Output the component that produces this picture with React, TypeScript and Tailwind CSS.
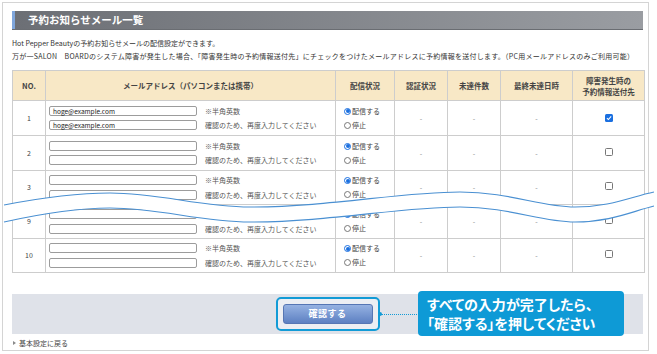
import React from 'react';

type Row = { no: number; email: string; checked: boolean; h: string };

const rows: Row[] = [
  { no: 1, email: 'hoge@example.com', checked: true, h: 'h-[35px]' },
  { no: 2, email: '', checked: false, h: 'h-[35px]' },
  { no: 3, email: '', checked: false, h: 'h-[34px]' },
  { no: 9, email: '', checked: false, h: 'h-[34px]' },
  { no: 10, email: '', checked: false, h: 'h-[34px]' },
];

const cell = 'border border-[#cdcdcd]';

const FieldBox: React.FC<{ value: string }> = ({ value }) => (
  <div className="w-[148px] h-[10px] border border-[#9c9c9c] rounded-[2px] bg-white pl-[3px] text-[6.5px] leading-[8px] text-[#222]">
    {value}
  </div>
);

const Radio: React.FC<{ on?: boolean; label: string }> = ({ on, label }) => (
  <div className="flex items-center gap-[1px] h-[14px]">
    <span
      className={
        on
          ? 'w-[7px] h-[7px] rounded-full border border-[#1a6fe0] bg-white flex items-center justify-center'
          : 'w-[7px] h-[7px] rounded-full border border-[#777] bg-white'
      }
    >
      {on && <span className="w-[4px] h-[4px] rounded-full bg-[#1a6fe0]" />}
    </span>
    <span>{label}</span>
  </div>
);

const Check: React.FC<{ on: boolean }> = ({ on }) =>
  on ? (
    <span className="inline-flex w-[8px] h-[8px] rounded-[1.5px] bg-[#1a6fe0] items-center justify-center">
      <svg width="6" height="6" viewBox="0 0 10 10">
        <path d="M1.5 5.2 L4 7.6 L8.6 2.4" fill="none" stroke="#fff" strokeWidth="1.8" />
      </svg>
    </span>
  ) : (
    <span className="inline-block w-[8px] h-[8px] rounded-[1.5px] border border-[#777] bg-white" />
  );

export default function App() {
  return (
    <div className="relative w-[657px] h-[354px] bg-white font-['Noto_Sans_CJK_JP',sans-serif] text-[#333]">
      <div className="ml-[2px] mt-[2px] w-[647px] h-[349px] border border-[#d4d4d4] pl-[9px] pt-[8px]">
        <div className="w-[631px] h-[19px] flex border-b border-[#6a6d72] bg-gradient-to-r from-[#6c6f75] to-[#9a9da2]">
          <div className="w-[3px] bg-[#7fa6dc]" />
          <div className="pl-[13px] text-[10.5px] leading-[18px] font-bold text-white">予約お知らせメール一覧</div>
        </div>

        <div className="mt-[7px] text-[7px] leading-[13px] text-[#333]">
          <p>Hot Pepper Beautyの予約お知らせメールの配信設定ができます。</p>
          <p className="tracking-[0.25px]">
            万が一SALON　BOARDのシステム障害が発生した場合、「障害発生時の予約情報送付先」にチェックをつけたメールアドレスに予約情報を送付します。（PC用メールアドレスのみご利用可能）
          </p>
        </div>

        <table className="mt-[7px] w-[632px] table-fixed border-collapse text-[7px] text-[#444]">
          <colgroup>
            <col className="w-[33px]" />
            <col className="w-[290px]" />
            <col className="w-[59px]" />
            <col className="w-[53px]" />
            <col className="w-[53px]" />
            <col className="w-[72px]" />
            <col className="w-[72px]" />
          </colgroup>
          <thead>
            <tr className="h-[30px] bg-[#f8e8c6] text-[7.5px] font-bold leading-[11px]">
              <th className={cell}>NO.</th>
              <th className={cell}>メールアドレス（パソコンまたは携帯）</th>
              <th className={cell}>配信状況</th>
              <th className={cell}>認証状況</th>
              <th className={cell}>未達件数</th>
              <th className={cell}>最終未達日時</th>
              <th className={cell}>
                障害発生時の
                <br />
                予約情報送付先
              </th>
            </tr>
          </thead>
          <tbody>
            {rows.map((r) => (
              <tr key={r.no} className={r.h}>
                <td className={`${cell} text-center`}>{r.no}</td>
                <td className={`${cell} pl-[3px]`}>
                  <div className="flex flex-col gap-[4px] text-[7px] text-[#555]">
                    <div className="flex items-center gap-[8px]">
                      <FieldBox value={r.email} />
                      <span>※半角英数</span>
                    </div>
                    <div className="flex items-center gap-[8px]">
                      <FieldBox value={r.email} />
                      <span>確認のため、再度入力してください</span>
                    </div>
                  </div>
                </td>
                <td className={`${cell} pl-[8px]`}>
                  <Radio on label="配信する" />
                  <Radio label="停止" />
                </td>
                <td className={`${cell} text-center text-[#888]`}>-</td>
                <td className={`${cell} text-center text-[#888]`}>-</td>
                <td className={`${cell} text-center text-[#888]`}>-</td>
                <td className={`${cell} text-center`}>
                  <Check on={r.checked} />
                </td>
              </tr>
            ))}
          </tbody>
        </table>

        <div className="relative mt-[21px] w-[631px] h-[40px] bg-[#dfe2e9] flex items-center justify-center">
          <div className="border-2 border-[#129bd6] rounded-[5px] bg-[#eceef3] px-[5px] py-[5px]">
            <div className="w-[90px] h-[20px] rounded-[3px] border border-[#5676b4] bg-gradient-to-b from-[#96b2e2] to-[#5d80c2] text-white text-[9px] font-bold leading-[18px] text-center tracking-[0.5px]">
              確認する
            </div>
          </div>
          <div className="absolute left-[366px] top-[18px] w-[4px] h-[4px] rounded-full bg-[#129bd6]" />
          <div className="absolute left-[369px] top-[19.5px] w-[38px] border-t border-dotted border-[#129bd6]" />
          <div className="absolute left-[406px] top-[-3px] w-[206px] h-[45px] rounded-[4px] bg-[#0e9ad6] text-white text-[14px] font-bold leading-[19px] pl-[9px] pt-[4px] [font-feature-settings:'palt']">
            <p>すべての入力が完了したら、</p>
            <p>「確認する」を押してください</p>
          </div>
        </div>

        <div className="mt-[3px] flex items-center gap-[3px] text-[7px] leading-[12px] text-[#444]">
          <span className="w-0 h-0 border-y-[2.5px] border-y-transparent border-l-[3px] border-l-[#8a8a8a] ml-[1px]" />
          <span>基本設定に戻る</span>
        </div>
      </div>

      <svg className="absolute left-0 top-0" width="657" height="354" viewBox="0 0 657 354">
        <path
          d="M4,203 C40,196 75,191 110,191 C160,191 200,205 250,205 C330,205 400,190 460,190 C510,190 540,205 575,205 C610,205 630,195 654,190 L654,204 C630,210 610,220 575,220 C540,220 510,205 460,205 C400,205 330,220 250,220 C200,220 160,206 110,206 C75,206 40,212 4,220 Z"
          fill="#fff"
        />
        <path
          d="M4,203 C40,196 75,191 110,191 C160,191 200,205 250,205 C330,205 400,190 460,190 C510,190 540,205 575,205 C610,205 630,195 654,190"
          fill="none"
          stroke="#4a90d2"
          strokeWidth="1.2"
        />
        <path
          d="M4,220 C40,212 75,206 110,206 C160,206 200,220 250,220 C330,220 400,205 460,205 C510,205 540,220 575,220 C610,220 630,210 654,204"
          fill="none"
          stroke="#4a90d2"
          strokeWidth="1.2"
        />
      </svg>
    </div>
  );
}
